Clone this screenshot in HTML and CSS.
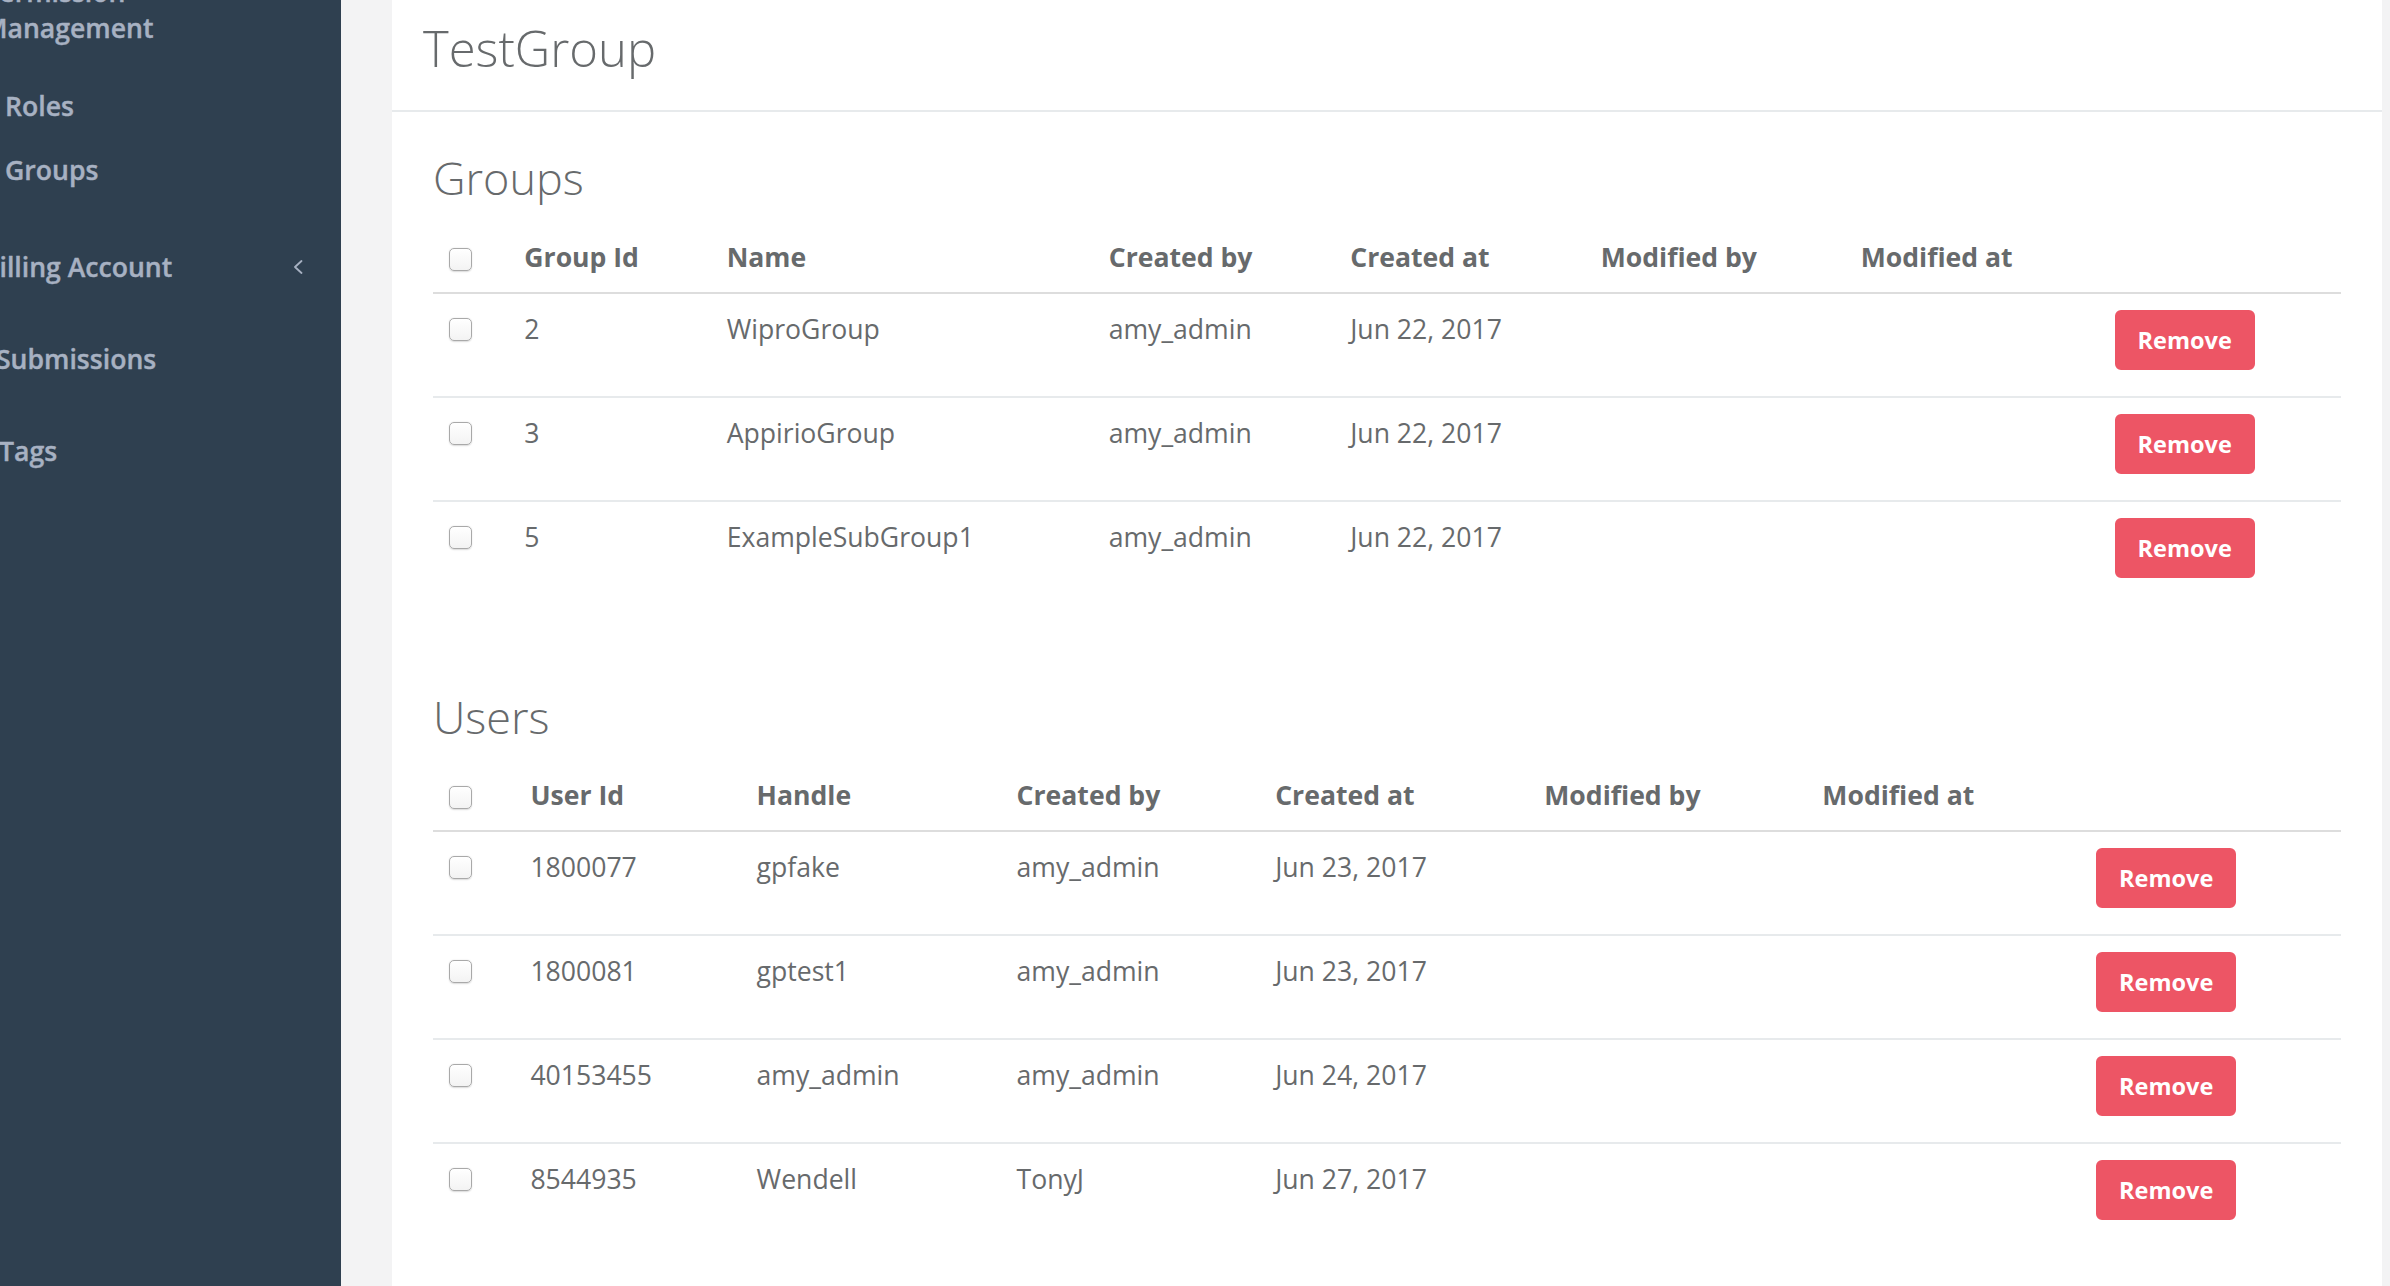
FILE: index.html
```html
<!DOCTYPE html>
<html lang="en">
<head>
<meta charset="utf-8">
<title>TestGroup</title>
<link rel="stylesheet" href="styles.css">
</head>
<body>
<div class="layout">
  <aside class="sidebar">
    <ul class="nav">
      <li class="nav-item">
        <a class="nav-link"><span class="nav-label label-perm">Permission Management</span></a>
        <ul class="subnav">
          <li><a class="sub-link">Roles</a></li>
          <li><a class="sub-link">Groups</a></li>
        </ul>
      </li>
      <li class="nav-item">
        <a class="nav-link nav-link-arrow"><span class="nav-label label-billing">Billing Account</span>
          <svg class="chevron" viewBox="0 0 10 14" width="10" height="14"><polyline points="8.5,1 2,7 8.5,13" fill="none" stroke="#a7b1c2" stroke-width="1.8" stroke-linecap="round" stroke-linejoin="round"/></svg>
        </a>
      </li>
      <li class="nav-item"><a class="nav-link"><span class="nav-label label-subs">Submissions</span></a></li>
      <li class="nav-item"><a class="nav-link"><span class="nav-label label-tags">Tags</span></a></li>
    </ul>
  </aside>

  <main class="main">
    <header class="page-heading">
      <h1 class="page-title">TestGroup</h1>
    </header>

    <div class="content">
      <section class="section section-groups">
        <h2 class="section-title">Groups</h2>
        <table class="data-table">
          <thead>
            <tr>
              <th class="g1"><input type="checkbox" class="check check-head"></th>
              <th class="g2">Group Id</th>
              <th class="g3">Name</th>
              <th class="g4">Created by</th>
              <th class="g5">Created at</th>
              <th class="g6">Modified by</th>
              <th class="g7">Modified at</th>
              <th class="g8"></th>
            </tr>
          </thead>
          <tbody>
            <tr>
              <td><input type="checkbox" class="check"></td>
              <td>2</td><td>WiproGroup</td><td>amy_admin</td><td>Jun 22, 2017</td><td></td><td></td>
              <td><button class="btn-remove">Remove</button></td>
            </tr>
            <tr>
              <td><input type="checkbox" class="check"></td>
              <td>3</td><td>AppirioGroup</td><td>amy_admin</td><td>Jun 22, 2017</td><td></td><td></td>
              <td><button class="btn-remove">Remove</button></td>
            </tr>
            <tr>
              <td><input type="checkbox" class="check"></td>
              <td>5</td><td>ExampleSubGroup1</td><td>amy_admin</td><td>Jun 22, 2017</td><td></td><td></td>
              <td><button class="btn-remove">Remove</button></td>
            </tr>
          </tbody>
        </table>
      </section>

      <section class="section section-users">
        <h2 class="section-title">Users</h2>
        <table class="data-table">
          <thead>
            <tr>
              <th class="u1"><input type="checkbox" class="check check-head"></th>
              <th class="u2">User Id</th>
              <th class="u3">Handle</th>
              <th class="u4">Created by</th>
              <th class="u5">Created at</th>
              <th class="u6">Modified by</th>
              <th class="u7">Modified at</th>
              <th class="u8"></th>
            </tr>
          </thead>
          <tbody>
            <tr>
              <td><input type="checkbox" class="check"></td>
              <td>1800077</td><td>gpfake</td><td>amy_admin</td><td>Jun 23, 2017</td><td></td><td></td>
              <td><button class="btn-remove">Remove</button></td>
            </tr>
            <tr>
              <td><input type="checkbox" class="check"></td>
              <td>1800081</td><td>gptest1</td><td>amy_admin</td><td>Jun 23, 2017</td><td></td><td></td>
              <td><button class="btn-remove">Remove</button></td>
            </tr>
            <tr>
              <td><input type="checkbox" class="check"></td>
              <td>40153455</td><td>amy_admin</td><td>amy_admin</td><td>Jun 24, 2017</td><td></td><td></td>
              <td><button class="btn-remove">Remove</button></td>
            </tr>
            <tr>
              <td><input type="checkbox" class="check"></td>
              <td>8544935</td><td>Wendell</td><td>TonyJ</td><td>Jun 27, 2017</td><td></td><td></td>
              <td><button class="btn-remove">Remove</button></td>
            </tr>
          </tbody>
        </table>
      </section>
    </div>
  </main>
</div>
</body>
</html>
```

FILE: styles.css
```css
* { box-sizing: border-box; }

html, body {
  margin: 0;
  padding: 0;
  height: 100%;
}

body {
  background: #f3f3f4;
  font-family: "Open Sans", "Liberation Sans", sans-serif;
  color: #676a6c;
  font-size: 26.6px;
  overflow: hidden;
}

.layout {
  display: flex;
  min-height: 100vh;
}

/* ---------- Sidebar ---------- */
.sidebar {
  width: 341px;
  flex: 0 0 341px;
  background: #2f4050;
  overflow: hidden;
  min-height: 100vh;
}

.nav, .subnav {
  list-style: none;
  margin: 0;
  padding: 0;
}

.nav {
  margin-top: -54px;
}

.nav-link {
  display: flex;
  align-items: center;
  padding: 28px 0;
  color: #a7b1c2;
  font-weight: 600;
  font-size: 26.6px;
  line-height: 36px;
  white-space: nowrap;
  -webkit-text-stroke: 0.4px #a7b1c2;
}

.nav-link-arrow {
  justify-content: space-between;
  padding-right: 38px;
}

.nav-label { display: block; }

.label-perm {
  margin-left: -17px;
  white-space: normal;
  width: 200px;
}
.label-billing { margin-left: -18px; }
.label-subs { margin-left: -4px; }
.label-tags { margin-left: -1px; }

.chevron {
  display: block;
  flex: 0 0 auto;
}

.subnav {
  padding-bottom: 19px;
}

.sub-link {
  display: block;
  padding: 14px 0 14px 5px;
  color: #a7b1c2;
  font-weight: 600;
  font-size: 26.6px;
  line-height: 36px;
  -webkit-text-stroke: 0.4px #a7b1c2;
}

/* ---------- Main ---------- */
.main {
  flex: 0 0 1990px;
  width: 1990px;
  margin-left: 51px;
  background: #fff;
  min-height: 100vh;
}

.page-heading {
  height: 112px;
  border-bottom: 2px solid #e7eaec;
  padding: 22px 31px 0;
}

.page-title {
  margin: 0;
  font-size: 49px;
  font-weight: 300;
  line-height: 1.1;
  color: #676a6c;
}

.content {
  padding: 0 41px;
}

.section-title {
  margin: 0 0 19px;
  font-size: 45px;
  font-weight: 300;
  line-height: 1.1;
  color: #676a6c;
}

.section-groups .section-title { margin-top: 41px; }
.section-users .section-title { margin-top: 88px; }

/* ---------- Tables ---------- */
.data-table {
  width: 1908px;
  table-layout: fixed;
  border-collapse: separate;
  border-spacing: 0;
  margin-bottom: 0;
  font-size: 26.6px;
  line-height: 38px;
}

.data-table th,
.data-table td {
  padding: 16px;
  text-align: left;
  white-space: nowrap;
}

.data-table th {
  font-weight: 700;
  vertical-align: top;
  border-bottom: 2px solid #dddddd;
}

.data-table td {
  vertical-align: top;
  border-top: 2px solid #e7eaec;
}

.data-table tbody tr:first-child td { border-top: 0; }

/* Groups column widths (border-box) */
.g1 { width: 75.3px; }
.g2 { width: 202.4px; }
.g3 { width: 382px; }
.g4 { width: 241.5px; }
.g5 { width: 250.5px; }
.g6 { width: 260px; }
.g7 { width: 254px; }
.g8 { width: auto; }

/* Users column widths (border-box) */
.u1 { width: 81.4px; }
.u2 { width: 226.2px; }
.u3 { width: 260px; }
.u4 { width: 258.6px; }
.u5 { width: 269.1px; }
.u6 { width: 278.1px; }
.u7 { width: 273.8px; }
.u8 { width: auto; }

.check {
  -webkit-appearance: none;
  appearance: none;
  display: block;
  width: 23px;
  height: 23px;
  margin: 8px 0 0 0;
  border: 1.5px solid #a9a9a9;
  border-radius: 5px;
  background: linear-gradient(#ffffff, #f3f3f3);
  box-shadow: 0 0.5px 1.5px rgba(0, 0, 0, 0.15);
}

.check-head { margin-top: 10px; }

.btn-remove {
  display: block;
  width: 140px;
  height: 60px;
  margin: 0 0 10px 0;
  padding: 0;
  border: 2px solid #ed5565;
  border-radius: 6px;
  background: #ed5565;
  color: #ffffff;
  font-family: "Open Sans", "Liberation Sans", sans-serif;
  font-size: 23.5px;
  font-weight: 700;
  line-height: 56px;
  text-align: center;
}
```
